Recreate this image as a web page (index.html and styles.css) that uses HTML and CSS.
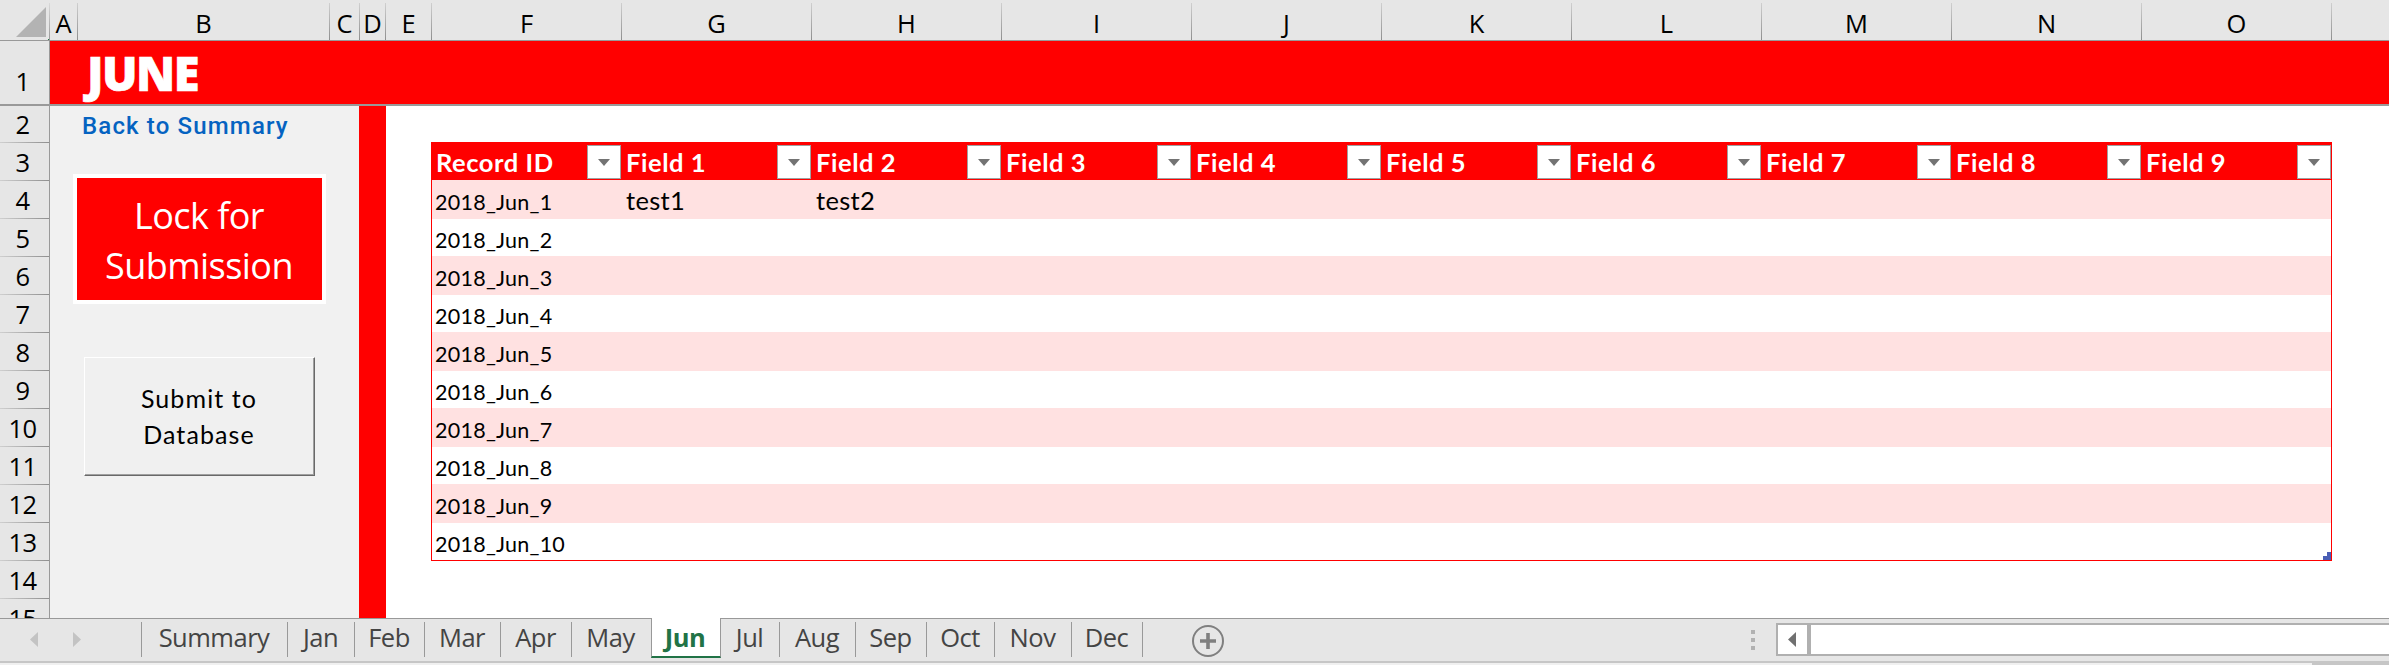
FILE: index.html
```html
<!DOCTYPE html>
<html lang="en">
<head>
<meta charset="utf-8">
<title>June</title>
<link rel="stylesheet" href="styles.css">
</head>
<body>
<div class="app">
  <div class="col-heads">
    <div class="corner"><svg width="50" height="40"><path d="M16 37H46V7Z" fill="#b3b3b3"/><path d="M48 39h1v1h-1z" fill="#217346"/></svg></div>
    <div class="ch ch-a">A</div><div class="ch ch-b">B</div><div class="ch ch-c">C</div><div class="ch ch-d">D</div><div class="ch ch-e">E</div>
    <div class="ch">F</div><div class="ch">G</div><div class="ch">H</div><div class="ch">I</div><div class="ch">J</div><div class="ch">K</div><div class="ch">L</div><div class="ch">M</div><div class="ch">N</div><div class="ch">O</div>
  </div>
  <div class="middle">
    <div class="row-heads">
      <div class="rh rh-first">1</div><div class="rh rh-second">2</div><div class="rh">3</div><div class="rh">4</div><div class="rh">5</div><div class="rh">6</div><div class="rh">7</div><div class="rh">8</div><div class="rh">9</div><div class="rh">10</div><div class="rh">11</div><div class="rh">12</div><div class="rh">13</div><div class="rh">14</div><div class="rh">15</div>
    </div>
    <div class="sheet">
      <div class="banner"><span class="month">JUNE</span></div>
      <div class="content">
        <div class="side">
          <a class="back">Back to Summary</a>
          <div class="lock"><span class="lock-1">Lock for</span><span class="lock-2">Submission</span></div>
          <div class="submit"><span class="sub-1">Submit to</span><span class="sub-2">Database</span></div>
        </div>
        <div class="records">
          <div class="thead">
            <div class="th"><span class="rid">Record ID</span><i class="filter"></i></div>
            <div class="th"><span>Field 1</span><i class="filter"></i></div>
            <div class="th"><span>Field 2</span><i class="filter"></i></div>
            <div class="th"><span>Field 3</span><i class="filter"></i></div>
            <div class="th"><span>Field 4</span><i class="filter"></i></div>
            <div class="th"><span>Field 5</span><i class="filter"></i></div>
            <div class="th"><span>Field 6</span><i class="filter"></i></div>
            <div class="th"><span>Field 7</span><i class="filter"></i></div>
            <div class="th"><span>Field 8</span><i class="filter"></i></div>
            <div class="th"><span>Field 9</span><i class="filter"></i></div>
          </div>
          <div class="tbody">
            <div class="tr band"><span class="id">2018_Jun_1</span><span class="val">test1</span><span class="val">test2</span></div>
            <div class="tr"><span class="id">2018_Jun_2</span></div>
            <div class="tr band"><span class="id">2018_Jun_3</span></div>
            <div class="tr"><span class="id">2018_Jun_4</span></div>
            <div class="tr band"><span class="id">2018_Jun_5</span></div>
            <div class="tr"><span class="id">2018_Jun_6</span></div>
            <div class="tr band"><span class="id">2018_Jun_7</span></div>
            <div class="tr"><span class="id">2018_Jun_8</span></div>
            <div class="tr band"><span class="id">2018_Jun_9</span></div>
            <div class="tr"><span class="id">2018_Jun_10</span></div>
          </div>
          <svg class="handle" width="8" height="8"><path d="M4 0h4v8H0V4h4z" fill="#4a5fb5"/></svg>
        </div>
      </div>
    </div>
  </div>
  <div class="tabbar">
    <div class="nav"><svg width="141" height="42"><path d="M38 13v15l-8-7.500z M73 13v15l8-7.500z" fill="#c3c3c3"/></svg></div>
    <div class="tab t-summary"><span>Summary</span></div>
    <div class="tab t-jan"><span>Jan</span></div>
    <div class="tab t-feb"><span>Feb</span></div>
    <div class="tab t-mar"><span>Mar</span></div>
    <div class="tab t-apr"><span>Apr</span></div>
    <div class="tab t-may"><span>May</span></div>
    <div class="tab active"><span>Jun</span></div>
    <div class="tab t-jul"><span>Jul</span></div>
    <div class="tab t-aug"><span>Aug</span></div>
    <div class="tab t-sep"><span>Sep</span></div>
    <div class="tab t-oct"><span>Oct</span></div>
    <div class="tab t-nov"><span>Nov</span></div>
    <div class="tab t-dec"><span>Dec</span></div>
    <svg class="add" width="34" height="34"><circle cx="17" cy="17" r="15" fill="none" stroke="#7f7f7f" stroke-width="2"/><path d="M9 17h16M17 9v16" stroke="#7f7f7f" stroke-width="3.600"/></svg>
    <svg class="grip" width="4" height="20"><path d="M0 0h4v4H0zM0 8h4v4H0zM0 16h4v4H0z" fill="#b1b1b1"/></svg>
    <div class="scroll"><div class="scroll-btn"><svg width="8" height="15"><path d="M8 0v15L0 7.500z" fill="#707070"/></svg></div></div>
  </div>
  <div class="status"></div>
</div>
</body>
</html>
```
FILE: styles.css
```css
* { box-sizing: border-box; }
body { margin: 0; background: #fff; font-family: "Open Sans", "Noto Sans", sans-serif; overflow: hidden; }
.app { width: 2389px; height: 665px; display: flex; flex-direction: column; overflow: hidden; }

/* column letters */
.col-heads { display: flex; height: 41px; flex: none; background: #e6e6e6; border-bottom: 1px solid #999; }
.corner { width: 50px; background: linear-gradient(#d9d9d9, #999) right 3px / 1px 37px no-repeat; background-position: right 3px; }
.corner svg { display: block; }
.ch { width: 190px; height: 40px; padding: 3px 1px 0 0; line-height: 40px; font-size: 25.5px; text-align: center; color: #000;
  background: linear-gradient(#cfcfcf, #8f8f8f) right 3px / 1px 37px no-repeat; background-position: right 3px; }
.ch-a { width: 28px; }
.ch-b { width: 252px; }
.ch-c { width: 30px; }
.ch-d { width: 26px; }
.ch-e { width: 46px; }

/* row numbers */
.middle { display: flex; height: 577px; flex: none; overflow: hidden; }
.row-heads { width: 50px; flex: none; background: #e6e6e6; border-right: 1px solid #999; }
.rh { height: 38px; padding-right: 4px; line-height: 38px; font-size: 25.5px; letter-spacing: -.5px; text-align: center; color: #000;
  background: linear-gradient(90deg, #cfcfcf, #8f8f8f) 0 bottom / 100% 1px no-repeat; }
.rh-first { height: 65px; padding-top: 21px; border-bottom: 2px solid #999; background: none; }
.rh-second { height: 37px; line-height: 36px; }

/* sheet */
.sheet { flex: 1; }
.banner { height: 65px; background: #f00; border-bottom: 2px solid #999; padding-left: 37px; }
.month { display: block; color: #fff; font-size: 47px; font-weight: 800; line-height: 64px; letter-spacing: -1.5px; -webkit-text-stroke: .6px #fff; }
.content { display: flex; height: 512px; }
.side { width: 336px; flex: none; background: #f1f1f1; border-right: 27px solid #f00; display: flex; flex-direction: column; }
.back { height: 68px; padding-left: 32px; font: 500 24px/40px Roboto, sans-serif; letter-spacing: 1.15px; color: #0563c1; white-space: nowrap; }
.lock { width: 253px; height: 130px; margin-left: 23px; border: 4px solid #fff; background: #f00; color: #fff; display: flex; flex-direction: column; align-items: center; padding: 13px 1px 0 0; font-size: 36px; font-weight: 400; line-height: 50px; letter-spacing: -.55px; }
.submit { width: 231px; height: 119px; margin: 53px 0 0 34px; background: #f0f0f0; border: 1px solid #fff; border-right-color: #696969; border-bottom-color: #696969; box-shadow: inset -1px -1px #a0a0a0; display: flex; flex-direction: column; align-items: center; padding: 22px 1px 0 0; font-family: Lato, sans-serif; font-size: 25px; letter-spacing: 1.1px; line-height: 36px; color: #000; }

/* records table */
.records { position: relative; width: 1901px; height: 419px; margin: 36px 0 0 45px; border: 1px solid #f00; border-top: 0; font-family: Lato, sans-serif; }
.thead { display: flex; height: 38px; margin: 0 -1px; background: #f00; }
.th { width: 190px; display: flex; justify-content: space-between; padding: 3px 0 0 5px; color: #fff; font-size: 25.5px; font-weight: 700; line-height: 34px; letter-spacing: .55px; white-space: nowrap; }
.filter { width: 34px; height: 34px; flex: none; background: #fff; border: 1px solid #a0a0a0; display: flex; align-items: center; justify-content: center; }
.filter::before { content: ""; border: 6.5px solid transparent; border-top: 7px solid #737373; border-bottom: 0; }
.tr { display: flex; height: 37px; line-height: 41px; white-space: nowrap; color: #000; }
.band { height: 39px; background: #ffe1e1; }
.tr span { width: 190px; padding-left: 4px; }
.tr .id { font-size: 21.5px; padding-left: 3px; letter-spacing: .25px; line-height: 42px; }
.tr.band .id { line-height: 44px; }
.tr .val { font-size: 25.5px; letter-spacing: .3px; }
.handle { position: absolute; right: 0; bottom: 0; }

/* sheet tabs */
.tabbar { display: flex; height: 43px; flex: none; background: #e6e6e6; border-top: 1px solid #999; }
.nav { width: 142px; height: 42px; background: linear-gradient(#999, #999) right 3px / 1px 35px no-repeat; background-position: right 3px; }
.tab { height: 42px; padding-right: 2px; line-height: 37px; font-size: 25.5px; text-align: center; color: #444; display: flex; justify-content: center;
  background: linear-gradient(#999, #999) no-repeat; background-size: 1px 35px; background-position: right 3px; letter-spacing: -.5px; }
.t-summary { width: 146px; }
.t-jan { width: 67px; }
.t-feb { width: 70px; }
.t-mar { width: 76px; }
.t-apr { width: 71px; }
.t-may { width: 79px; background: none; }
.active { width: 70px; height: 40px; margin-top: -1px; padding-top: 1px; background: #fff; border: 1px solid #999; border-width: 0 1px 2px; border-bottom-color: #217346; color: #217346; font-weight: 700; }
.t-jul { width: 59px; }
.t-aug { width: 76px; }
.t-sep { width: 71px; }
.t-oct { width: 68px; }
.t-nov { width: 77px; }
.t-dec { width: 71px; }
.add { margin: 5px 0 0 48px; }
.grip { margin: 11px 0 0 526px; }
.scroll { flex: 1; height: 33px; margin: 4px 0 0 21px; background: #fff; border: 2px solid #b0b0b0; border-right: 0; }
.scroll-btn { width: 33px; height: 29px; border-right: 4px solid #b0b0b0; display: flex; align-items: center; padding-left: 10px; }
.status { height: 4px; border-top: 2px solid #c6c6c6; background: linear-gradient(90deg, #f0f0f0 2312px, #c6c6c6 2312px); }
```
